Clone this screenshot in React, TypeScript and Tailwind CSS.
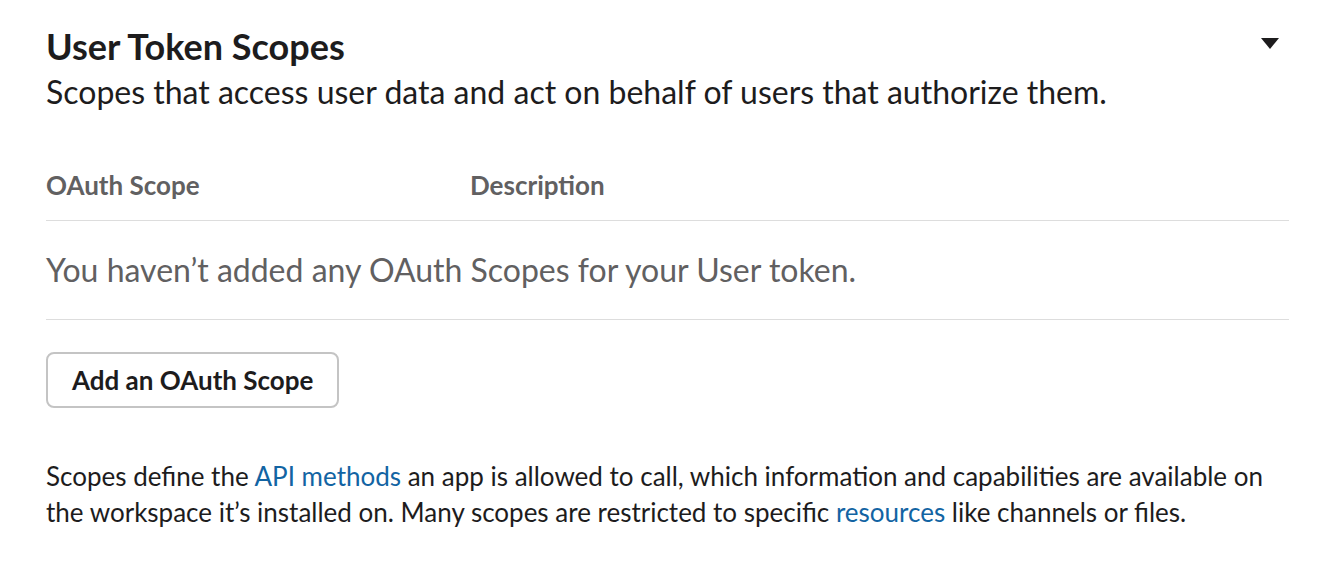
export default function App() {
  return (
    <div className="min-h-[570px] w-[1320px] bg-white font-['Lato','Liberation_Sans',sans-serif] text-[#1d1c1d]">
      <div className="pl-[46px] pr-[31px] pt-[24px]">
        <div className="flex items-start justify-between">
          <h2 className="text-[36px] font-bold leading-[44px]">User Token Scopes</h2>
          <svg className="mt-[14px] mr-[10px]" width="18" height="11" viewBox="0 0 18 11">
            <path d="M0 0 H18 L9 11 Z" fill="#1d1c1d" />
          </svg>
        </div>
        <p className="text-[32px] leading-[48px]">
          Scopes that access user data and act on behalf of users that authorize them.
        </p>

        <div className="mt-[53px] flex border-b border-[#dddddd] pb-[19px] text-[26px] font-bold leading-[32px] text-[#616061]">
          <div className="w-[424px]">OAuth Scope</div>
          <div>Description</div>
        </div>
        <div className="border-b border-[#dddddd] py-[30px] text-[32px] leading-[38px] text-[#616061]">
          You haven’t added any OAuth Scopes for your User token.
        </div>

        <button className="mt-[32px] h-[56px] rounded-[8px] border-2 border-[#c4c4c4] bg-white px-[24px] text-[26px] font-bold text-[#1d1c1d]">
          Add an OAuth Scope
        </button>

        <p className="mt-[50px] text-[26px] leading-[36px]">
          Scopes define the <a className="text-[#1264a3]">API methods</a> an app is allowed to call, which
          information and capabilities are available on the workspace it’s installed on. Many scopes are
          restricted to specific <a className="text-[#1264a3]">resources</a> like channels or files.
        </p>
      </div>
    </div>
  );
}
